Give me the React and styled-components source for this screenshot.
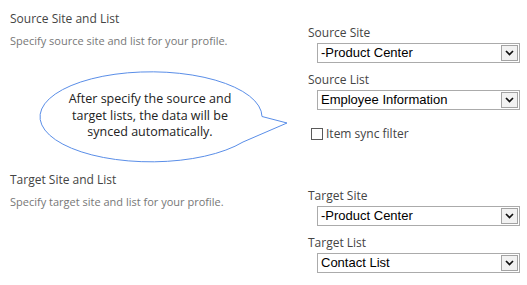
import React from 'react';
import styled, { createGlobalStyle } from 'styled-components';

const GlobalStyle = createGlobalStyle`
  html, body {
    margin: 0;
    padding: 0;
    background: #ffffff;
  }
  body {
    font-family: "Segoe UI", "Open Sans", sans-serif;
  }
`;

const Page = styled.div`
  position: relative;
  width: 527px;
  height: 285px;
  overflow: hidden;
  background: #fff;
`;

const Section = styled.div`
  display: flex;
  padding-top: ${(p) => p.$top}px;
`;

const InfoColumn = styled.div`
  width: 308px;
  padding-left: 10px;
  box-sizing: border-box;
`;

const SectionTitle = styled.div`
  font-size: 12px;
  line-height: 18px;
  color: #444;
`;

const SectionDescription = styled.div`
  margin-top: 4px;
  font-size: 11px;
  line-height: 18px;
  color: #777;
`;

const FieldColumn = styled.div`
  display: flex;
  flex-direction: column;
  padding-top: ${(p) => p.$top}px;
`;

const FieldLabel = styled.div`
  font-size: 12px;
  line-height: 18px;
  color: #444;
  margin-top: ${(p) => (p.$first ? 0 : 8)}px;
  margin-bottom: 1px;
`;

const SelectBox = styled.div`
  display: flex;
  align-items: stretch;
  width: 203px;
  height: 20px;
  margin-left: 9px;
  box-sizing: border-box;
  border: 1px solid #ababab;
  background: #fff;
`;

const SelectValue = styled.div`
  flex: 1;
  padding-left: 3px;
  font-family: "Liberation Sans", Arial, sans-serif;
  font-size: 13px;
  line-height: 18px;
  color: #000;
  white-space: nowrap;
  overflow: hidden;
`;

const ArrowButton = styled.div`
  width: 17px;
  margin: 1px;
  box-sizing: border-box;
  border: 1px solid #a3a3a3;
  background: #f2f2f2;
  display: flex;
  align-items: center;
  justify-content: center;
`;

const CheckRow = styled.label`
  display: flex;
  align-items: center;
  gap: 3px;
  margin-top: 15px;
  margin-left: 3px;
  font-size: 12px;
  line-height: 18px;
  color: #444;
`;

const CheckBox = styled.span`
  width: 12px;
  height: 12px;
  box-sizing: border-box;
  border: 1px solid #5a5a5a;
  background: #fff;
`;

const Callout = styled.div`
  position: absolute;
  left: 36px;
  top: 68px;
  width: 256px;
  height: 100px;
`;

const CalloutShape = styled.svg`
  position: absolute;
  left: 0;
  top: 0;
`;

const CalloutText = styled.div`
  position: relative;
  width: 228px;
  padding-top: 23px;
  text-align: center;
  font-size: 12.5px;
  line-height: 16.5px;
  color: #222;
`;

const Select = ({ value }) => (
  <SelectBox>
    <SelectValue>{value}</SelectValue>
    <ArrowButton>
      <svg width="9" height="6" viewBox="0 0 9 6">
        <path d="M1 1 L4.5 4.5 L8 1" fill="none" stroke="#111" strokeWidth="1.7" />
      </svg>
    </ArrowButton>
  </SelectBox>
);

const App = () => (
  <Page>
    <GlobalStyle />
    <Section $top={10}>
      <InfoColumn>
        <SectionTitle>Source Site and List</SectionTitle>
        <SectionDescription>Specify source site and list for your profile.</SectionDescription>
      </InfoColumn>
      <FieldColumn $top={14}>
        <FieldLabel $first>Source Site</FieldLabel>
        <Select value="-Product Center" />
        <FieldLabel>Source List</FieldLabel>
        <Select value="Employee Information" />
        <CheckRow>
          <CheckBox />
          Item sync filter
        </CheckRow>
      </FieldColumn>
    </Section>
    <Section $top={28}>
      <InfoColumn>
        <SectionTitle>Target Site and List</SectionTitle>
        <SectionDescription>Specify target site and list for your profile.</SectionDescription>
      </InfoColumn>
      <FieldColumn $top={16}>
        <FieldLabel $first>Target Site</FieldLabel>
        <Select value="-Product Center" />
        <FieldLabel>Target List</FieldLabel>
        <Select value="Contact List" />
      </FieldColumn>
    </Section>

    <Callout>
      <CalloutShape width="256" height="100" viewBox="0 0 256 100">
        <path
          d="M226 48.5 A111 45 0 1 0 207 74 L251 55 Z"
          fill="#fff"
          stroke="#5a8ee8"
          strokeWidth="1"
        />
      </CalloutShape>
      <CalloutText>
        After specify the source and
        <br />
        target lists, the data will be
        <br />
        synced automatically.
      </CalloutText>
    </Callout>
  </Page>
);

export default App;
